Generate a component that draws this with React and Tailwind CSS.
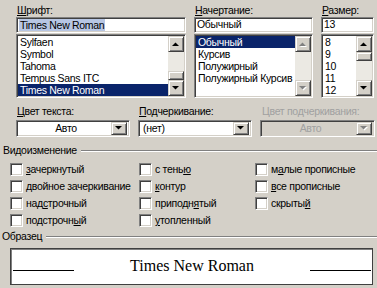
import React from "react";

const sunken =
  "border border-t-[#808080] border-l-[#808080] border-b-white border-r-white shadow-[inset_1px_1px_0_#404040,inset_-1px_-1px_0_#d4d0c8]";
const raised =
  "border border-t-[#d4d0c8] border-l-[#d4d0c8] border-b-[#404040] border-r-[#404040] shadow-[inset_1px_1px_0_#ffffff,inset_-1px_-1px_0_#808080]";

function Arrow({ up, disabled }) {
  const d = up ? "M0 4 L3.5 0.5 L7 4 Z" : "M0 0 L7 0 L3.5 3.5 Z";
  return (
    <svg width="8" height="5" viewBox="0 0 8 5">
      {disabled && <path d={d} fill="#ffffff" transform="translate(1 1)" />}
      <path d={d} fill={disabled ? "#808080" : "#000000"} />
    </svg>
  );
}

function ArrowButton({ up, disabled, className = "" }) {
  return (
    <div className={`${raised} bg-[#d4d0c8] flex items-center justify-center ${className}`}>
      <Arrow up={up} disabled={disabled} />
    </div>
  );
}

function ScrollBar({ thumb, disabled }) {
  // thumb: "top" | "bottom" | undefined
  return (
    <div className="w-[16px] h-full flex flex-col bg-[#ebe9e3]">
      <ArrowButton up disabled={disabled} className="h-[16px] w-[16px] shrink-0" />
      <div className="flex-1 flex flex-col">
        {thumb === "bottom" && <div className="flex-1" />}
        {thumb && <div className={`${raised} bg-[#d4d0c8] h-[9px]`} />}
      </div>
      <ArrowButton disabled={disabled} className="h-[16px] w-[16px] shrink-0" />
    </div>
  );
}

function ListBox({ items, selected, thumb, disabled, width }) {
  return (
    <div className={`${sunken} bg-white h-[64px] p-[1px] flex mt-[1px]`} style={{ width }}>
      <div className="flex-1 flex flex-col overflow-hidden">
        {items.map((it) => (
          <div
            key={it}
            className={`h-[12px] leading-[12px] pl-[2px] whitespace-nowrap ${
              it === selected ? "bg-[#0a246a] text-white" : "text-black"
            }`}
          >
            {it}
          </div>
        ))}
      </div>
      <ScrollBar thumb={thumb} disabled={disabled} />
    </div>
  );
}

function TextField({ children, width }) {
  return (
    <div className={`${sunken} bg-white h-[16px] flex items-center px-[2px]`} style={{ width }}>
      {children}
    </div>
  );
}

function Dropdown({ value, center, disabled }) {
  return (
    <div
      className={`${sunken} ${disabled ? "bg-[#d4d0c8] text-[#a0a0a0]" : "bg-white text-black"} h-[17px] w-full flex items-center p-[2px]`}
    >
      <div className={`flex-1 leading-[13px] pl-[2px] ${center ? "text-center" : ""}`}>{value}</div>
      <ArrowButton disabled={disabled} className="h-[13px] w-[16px]" />
    </div>
  );
}

function Check({ children }) {
  return (
    <div className="flex items-center gap-[3px] h-[17px]">
      <div className={`${sunken} bg-white w-[13px] h-[13px] shrink-0`} />
      <span className="whitespace-nowrap leading-[13px]">{children}</span>
    </div>
  );
}

function GroupTitle({ children }) {
  return (
    <div className="flex items-center gap-[4px]">
      <span className="leading-[13px] whitespace-nowrap">{children}</span>
      <div className="flex-1 flex flex-col">
        <div className="h-[1px] bg-[#808080]" />
        <div className="h-[1px] bg-white" />
      </div>
    </div>
  );
}

export default function App() {
  return (
    <div
      className="w-[377px] h-[288px] bg-[#d4d0c8] overflow-hidden text-[10.5px] tracking-[-0.3px] text-black"
      style={{ fontFamily: '"Liberation Sans", Arial, sans-serif' }}
    >
      {/* Font / style / size */}
      <div className="flex gap-[8px] pl-[16px] pt-[3px]">
        <div className="w-[170px]">
          <div className="leading-[14px] pl-[1px]">
            <u>Ш</u>рифт:
          </div>
          <TextField width={170}>
            <span className="bg-[#b7c6e3] leading-[12px] px-[1px]">Times New Roman</span>
          </TextField>
          <ListBox
            width={170}
            items={["Sylfaen", "Symbol", "Tahoma", "Tempus Sans ITC", "Times New Roman"]}
            selected="Times New Roman"
            thumb="bottom"
          />
        </div>
        <div className="w-[119px]">
          <div className="leading-[14px] pl-[1px]">
            <u>Н</u>ачертание:
          </div>
          <TextField width={119}>Обычный</TextField>
          <ListBox
            width={119}
            items={["Обычный", "Курсив", "Полужирный", "Полужирный Курсив"]}
            selected="Обычный"
            disabled
          />
        </div>
        <div className="w-[53px]">
          <div className="leading-[14px] pl-[1px]">
            <u>Р</u>азмер:
          </div>
          <TextField width={53}>13</TextField>
          <ListBox width={53} items={["8", "9", "10", "11", "12"]} thumb="top" />
        </div>
      </div>

      {/* Colour / underline */}
      <div className="flex gap-[8px] pl-[16px] pt-[6px]">
        <div className="w-[114px]">
          <div className="leading-[14px] pl-[1px] mb-[2px]">
            <u>Ц</u>вет текста:
          </div>
          <Dropdown value="Авто" center />
        </div>
        <div className="w-[114px]">
          <div className="leading-[14px] pl-[1px] mb-[2px]">
            <u>П</u>одчеркивание:
          </div>
          <Dropdown value="(нет)" />
        </div>
        <div className="w-[115px]">
          <div className="leading-[14px] pl-[2px] mb-[2px] text-[#a0a0a0]">Цвет подчеркивания:</div>
          <Dropdown value="Авто" center disabled />
        </div>
      </div>

      {/* Effects */}
      <div className="pl-[3px] pt-[7px]">
        <GroupTitle>Видоизменение</GroupTitle>
      </div>
      <div className="flex pl-[10px] pt-[4px]">
        <div className="w-[129px] flex flex-col">
          <Check>
            <u>з</u>ачеркнутый
          </Check>
          <Check>двойное зачеркивание</Check>
          <Check>
            над<u>с</u>трочный
          </Check>
          <Check>
            подстрочн<u>ы</u>й
          </Check>
        </div>
        <div className="w-[116px] flex flex-col">
          <Check>
            с тень<u>ю</u>
          </Check>
          <Check>
            <u>к</u>онтур
          </Check>
          <Check>
            приподн<u>я</u>тый
          </Check>
          <Check>
            <u>у</u>топленный
          </Check>
        </div>
        <div className="flex flex-col">
          <Check>
            м<u>а</u>лые прописные
          </Check>
          <Check>
            <u>в</u>се прописные
          </Check>
          <Check>
            скрыты<u>й</u>
          </Check>
        </div>
      </div>

      {/* Sample */}
      <div className="pl-[2px] pt-[1px]">
        <GroupTitle>Образец</GroupTitle>
      </div>
      <div className="pl-[10px] pr-[4px] pt-[5px]">
        <div className="border border-[#404040] shadow-[inset_1px_1px_0_#808080] bg-white h-[37px] flex items-end justify-between pl-[2px] pr-[1px] pb-[13px]">
          <div className="w-[61px] h-[1px] bg-black" />
          <span
            className="text-[16px] leading-[16px] tracking-normal -mb-[3px]"
            style={{ fontFamily: '"Liberation Serif", "Times New Roman", serif' }}
          >
            Times New Roman
          </span>
          <div className="w-[61px] h-[1px] bg-black" />
        </div>
      </div>
    </div>
  );
}
